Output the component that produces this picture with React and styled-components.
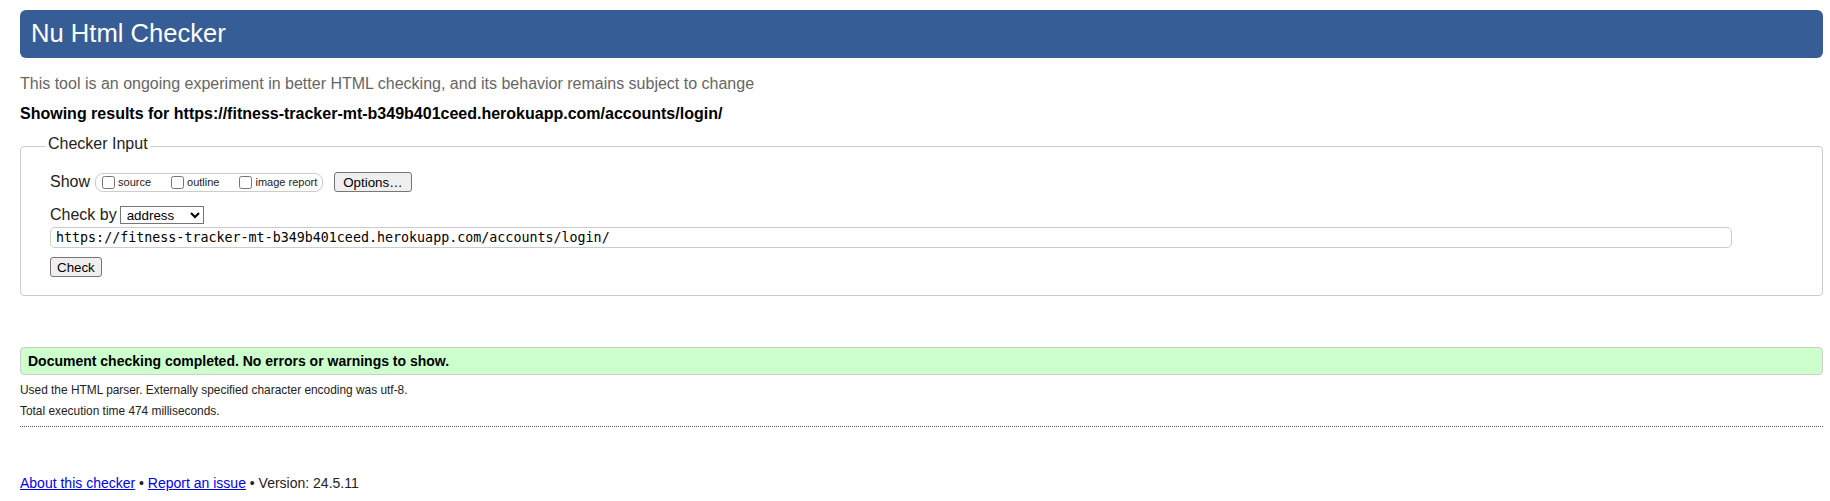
import React from "react";
import styled, { createGlobalStyle } from "styled-components";

const GlobalStyle = createGlobalStyle`
  html, body { margin: 0; padding: 0; background: #fff; }
  body {
    padding: 10px 7px 0 20px;
    font-family: "Liberation Sans", Arial, sans-serif;
    color: #000;
  }
  * { box-sizing: border-box; }
`;

const Header = styled.h1`
  margin: 0;
  height: 48px;
  line-height: 46px;
  padding: 0 11px 2px;
  font-size: 25.6px;
  font-weight: normal;
  color: #fff;
  background: #365d95;
  border-radius: 6px;
`;

const Intro = styled.p`
  margin: 16px 0 0;
  font-size: 16px;
  line-height: 20px;
  color: #666;
`;

const Results = styled.p`
  margin: 10px 0 0;
  font-size: 16px;
  line-height: 20px;
  font-weight: bold;
`;

const Fieldset = styled.fieldset`
  margin: 10px 0 0;
  padding: 0;
  border: 1px solid #ccc;
  border-radius: 4px;
  min-width: 0;
`;

const Legend = styled.legend`
  margin-left: 25px;
  padding: 0 2px 5px;
  font-size: 16px;
  line-height: 20px;
  color: #222;
`;

const Inner = styled.div`
  padding: 13px 0 18px 29px;
  display: flex;
  flex-direction: column;
  align-items: flex-start;
`;

const Row = styled.div`
  display: flex;
  align-items: center;
  height: ${(p) => p.$h}px;
  margin-top: ${(p) => p.$mt || 0}px;
`;

const Label = styled.span`
  font-size: 16px;
  line-height: 20px;
  color: #222;
  margin-right: ${(p) => p.$mr}px;
`;

const Group = styled.span`
  display: inline-flex;
  align-items: center;
  height: 19px;
  padding: 0 5px 0 6px;
  border: 1px solid #ccc;
  border-radius: 8px;
  gap: 20px;
`;

const Option = styled.label`
  display: inline-flex;
  align-items: center;
  font-size: 11px;
  color: #222;
  gap: 3px;
`;

const Box = styled.input`
  margin: 0;
  width: 13px;
  height: 13px;
`;

const Button = styled.button`
  margin-left: ${(p) => p.$ml || 0}px;
  height: 20px;
  padding: 0 ${(p) => p.$px}px;
  font-family: "Liberation Sans", Arial, sans-serif;
  font-size: 13.33px;
  color: #000;
  background: #efefef;
  border: 1px solid #767676;
  border-radius: 3px;
`;

const Select = styled.select`
  width: 84px;
  height: 18px;
  padding: 0 0 0 2px;
  font-family: "Liberation Sans", Arial, sans-serif;
  font-size: 13.33px;
  color: #000;
  background: #fff;
  border: 1px solid #767676;
  border-radius: 0;
`;

const UrlInput = styled.input`
  margin-top: 3px;
  width: 1682px;
  height: 21px;
  padding: 0 5px;
  font-family: "DejaVu Sans Mono", monospace;
  font-size: 13.33px;
  color: #000;
  border: 1px solid #ccc;
  border-radius: 5px;
`;

const Success = styled.p`
  margin: 51px 0 0;
  height: 28px;
  padding: 0 7px;
  line-height: 26px;
  font-size: 14px;
  font-weight: bold;
  background: #ccffcc;
  border: 1px solid #ccc;
  border-radius: 4px;
`;

const Details = styled.div`
  padding: 5px 0 5px;
  border-bottom: 1px dotted #555;
`;

const Small = styled.p`
  margin: 0;
  font-size: 11.9px;
  line-height: 20.5px;
  color: #222;
`;

const Footer = styled.p`
  margin: 46px 0 0;
  font-size: 14px;
  line-height: 20px;
  color: #222;
`;

const Link = styled.a`
  color: #0000ee;
  text-decoration: underline;
`;

export default function App() {
  return (
    <>
      <GlobalStyle />
      <Header>Nu Html Checker</Header>
      <Intro>
        This tool is an ongoing experiment in better HTML checking, and its
        behavior remains subject to change
      </Intro>
      <Results>
        Showing results for
        https://fitness-tracker-mt-b349b401ceed.herokuapp.com/accounts/login/
      </Results>
      <Fieldset>
        <Legend>Checker Input</Legend>
        <Inner>
          <Row $h={20}>
            <Label $mr={5}>Show</Label>
            <Group>
              <Option>
                <Box type="checkbox" />
                source
              </Option>
              <Option>
                <Box type="checkbox" />
                outline
              </Option>
              <Option>
                <Box type="checkbox" />
                image report
              </Option>
            </Group>
            <Button $ml={11} $px={8}>
              Options…
            </Button>
          </Row>
          <Row $h={19} $mt={13}>
            <Label $mr={3}>Check by</Label>
            <Select defaultValue="address">
              <option value="address">address</option>
              <option value="file">file upload</option>
              <option value="text">text input</option>
            </Select>
          </Row>
          <UrlInput
            type="url"
            defaultValue="https://fitness-tracker-mt-b349b401ceed.herokuapp.com/accounts/login/"
          />
          <Row $h={20} $mt={9}>
            <Button $px={6}>Check</Button>
          </Row>
        </Inner>
      </Fieldset>
      <Success>Document checking completed. No errors or warnings to show.</Success>
      <Details>
        <Small>
          Used the HTML parser. Externally specified character encoding was
          utf-8.
        </Small>
        <Small>Total execution time 474 milliseconds.</Small>
      </Details>
      <Footer>
        <Link href="#">About this checker</Link> •{" "}
        <Link href="#">Report an issue</Link> • Version: 24.5.11
      </Footer>
    </>
  );
}
